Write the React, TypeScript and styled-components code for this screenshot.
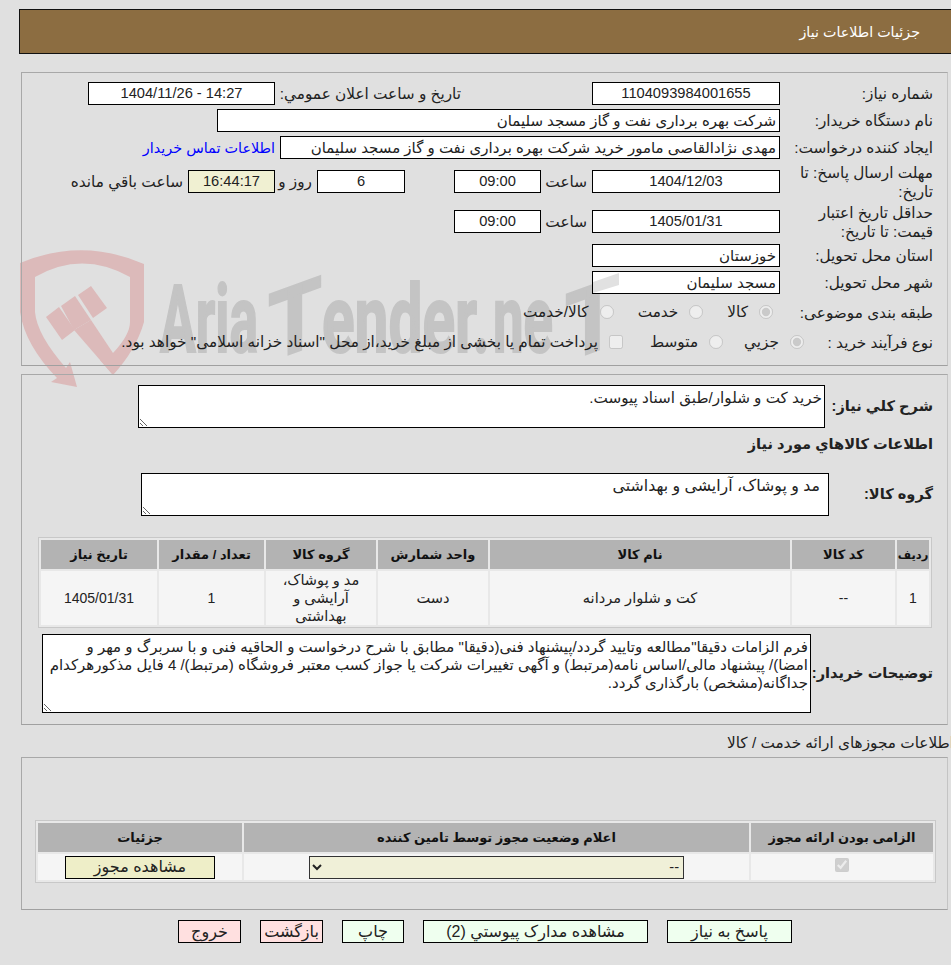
import * as React from "react";
import styled, { createGlobalStyle } from "styled-components";

const GlobalStyle = createGlobalStyle`
  html, body {
    margin: 0;
    padding: 0;
    background: #e0e0e0;
    overflow: hidden;
  }
  body {
    font-family: "Liberation Sans", "DejaVu Sans", sans-serif;
    font-size: 15.3px;
    color: #222;
  }
`;

const Page = styled.div`
  position: relative;
  width: 951px;
  height: 965px;
  overflow: hidden;
  padding-top: 9px;
  box-sizing: border-box;
`;

const Watermark = styled.svg`
  position: absolute;
  left: 0;
  top: 0;
  z-index: 0;
`;

const Content = styled.div`
  position: relative;
  z-index: 1;
`;

const Header = styled.div`
  height: 45px;
  margin-left: 19px;
  box-sizing: border-box;
  border: 1px solid #111;
  border-right: 0;
  background: #8c6d41;
  color: #fff;
  font-size: 14.3px;
  display: flex;
  align-items: center;
  padding-right: 31px;
`;

const Panel = styled.div<{ $top: number; $pt: number; $pb: number; $pr?: number }>`
  margin: ${(p) => p.$top}px 3px 0 0;
  margin-left: 21px;
  padding: ${(p) => p.$pt}px ${(p) => p.$pr ?? 14}px ${(p) => p.$pb}px 0;
  border: 1px solid #a8a8a8;
  border-right-color: #c4c4c4;
  border-bottom-color: #a0a0a0;
`;

const Row = styled.div<{ $top?: number; $h?: number }>`
  display: flex;
  align-items: center;
  margin-top: ${(p) => p.$top ?? 0}px;
  height: ${(p) => (p.$h ? `${p.$h}px` : "auto")};
`;

const Label = styled.div<{ $w?: number; $bold?: boolean; $wrap?: number }>`
  flex: none;
  width: ${(p) => p.$w ?? 153}px;
  box-sizing: border-box;
  padding-left: ${(p) => p.$wrap ?? 0}px;
  line-height: 19px;
  font-size: ${(p) => (p.$bold ? "14.6px" : "inherit")};
  font-weight: ${(p) => (p.$bold ? 700 : 400)};
`;

const Inline = styled.div<{ $w: number; $ml?: number; $mr?: number }>`
  flex: none;
  width: ${(p) => p.$w}px;
  margin-left: ${(p) => p.$ml ?? 0}px;
  margin-right: ${(p) => p.$mr ?? 0}px;
  box-sizing: border-box;
  white-space: nowrap;
`;

const Field = styled.div<{ $w: number; $num?: boolean; $tint?: boolean; $wedge?: boolean }>`
  position: relative;
  flex: none;
  width: ${(p) => p.$w}px;
  height: 23px;
  line-height: 21px;
  box-sizing: border-box;
  border: 1px solid #000;
  background: ${(p) => (p.$tint ? "#f0f0d2" : "#fff")};
  font-size: ${(p) => (p.$num ? "14.67px" : "15px")};
  text-align: ${(p) => (p.$num ? "center" : "right")};
  padding: 0 3px;
  white-space: nowrap;
  overflow: hidden;

  /* tip of the logo's last letter, which shows through this field */
  ${(p) =>
    p.$wedge &&
    `&::before {
      content: "";
      position: absolute;
      left: 0;
      top: 0;
      width: 26px;
      height: 21px;
      background: #e1e1e1;
      clip-path: polygon(0 10px, 26px 1px, 26px 13px, 0 21px);
    }`}
`;

const ContactLink = styled.a`
  color: #00f;
  font-size: 14.4px;
  text-decoration: none;
  margin-right: 5px;
  white-space: nowrap;
`;

const Option = styled.label<{ $ml?: number }>`
  display: flex;
  align-items: center;
  gap: 11px;
  margin-left: ${(p) => p.$ml ?? 24}px;
  white-space: nowrap;
`;

const Tick = styled.input`
  width: 14px;
  height: 14px;
  margin: 0;
  flex: none;
`;

const Note = styled.textarea<{ $w: number; $h: number; $pr?: number; $size?: number }>`
  flex: none;
  display: block;
  width: ${(p) => p.$w}px;
  height: ${(p) => p.$h}px;
  box-sizing: border-box;
  border: 1px solid #000;
  border-radius: 0;
  padding: 3px ${(p) => p.$pr ?? 2}px 2px 2px;
  margin: 0;
  background: #fff;
  color: #222;
  font: inherit;
  font-size: ${(p) => p.$size ?? 15}px;
  line-height: 18px;
  outline: 0;
`;

const Grid = styled.table<{ $w: number; $mr?: number }>`
  width: ${(p) => p.$w}px;
  margin-right: ${(p) => p.$mr ?? 0}px;
  table-layout: fixed;
  border-collapse: separate;
  border-spacing: 2px;
  border: 1px solid #c8c8c8;
  background: #e8e8e8;
  box-sizing: border-box;
`;

const Th = styled.th<{ $small?: boolean }>`
  background: #b3b3b3;
  color: #111;
  font-size: ${(p) => (p.$small ? "11.5px" : "13px")};
  font-weight: 700;
  padding: 0;
  height: 29px;
`;

const Td = styled.td<{ $h: number; $num?: boolean }>`
  background: #f5f5f5;
  text-align: center;
  padding: 0 10px;
  height: ${(p) => p.$h}px;
  line-height: 18px;
  font-size: ${(p) => (p.$num ? "14px" : "14.6px")};
`;

const Heading = styled.div`
  height: 20px;
  line-height: 20px;
  margin: 8px -3px 0 0;
  white-space: nowrap;
`;

const StatusSelect = styled.select`
  display: block;
  width: 375px;
  height: 23px;
  margin: 0 auto;
  box-sizing: border-box;
  border: 1px solid #333;
  border-radius: 0;
  background-color: #f0f0d8;
  color: #222;
  font: inherit;
  opacity: 1;
`;

const PermitButton = styled.button`
  display: block;
  width: 150px;
  height: 23px;
  margin: 0 auto;
  padding: 0;
  border: 1px solid #000;
  background: #eeeec8;
  color: #222;
  font: inherit;
  font-size: 16px;
`;

const Actions = styled.div`
  display: flex;
  gap: 19px;
  margin: 10px 159px 0 0;
`;

const ActionButton = styled.button<{ $w: number; $danger?: boolean }>`
  width: ${(p) => p.$w}px;
  height: 23px;
  padding: 0;
  border: 1px solid #000;
  background: ${(p) => (p.$danger ? "#ffe0e0" : "#efffef")};
  color: #222;
  font: inherit;
  font-size: 16px;
`;

const noop = () => {};

const markFont = {
  fontFamily: "Roboto, sans-serif",
  fontWeight: 700,
  fontSize: 94,
  fill: "#c4c4c4",
  stroke: "#c4c4c4",
  strokeWidth: 2,
  direction: "ltr" as const,
  lengthAdjust: "spacingAndGlyphs",
};

const buyerNote =
  'فرم الزامات دقیقا"مطالعه وتایید گردد/پیشنهاد فنی(دقیقا" مطابق با شرح درخواست و الحاقیه فنی و با سربرگ و مهر و\n' +
  'امضا)/ پیشنهاد مالی/اساس نامه(مرتبط) و آگهی تغییرات شرکت یا جواز کسب معتبر فروشگاه (مرتبط)/ 4 فایل مذکورهرکدام\n' +
  "جداگانه(مشخص) بارگذاری گردد.";

export default function App() {
  return (
    <Page dir="rtl">
      <GlobalStyle />
      <Watermark width="951" height="965" viewBox="0 0 951 965">
        <g fill="#dcbaba">
          <path d="M20 263 Q82 237 144 264 V322 Q136 350 113 375 L100 360 L113 353 Q130 335 130 322 V277 Q82 250 35 277 V312 Q37 335 66 368 L70 362 L77 387 L51 382 L57 378 Q25 345 20 312 Z" />
          <polygon points="74,330 113,375 113,353 91,320" />
          <polygon points="61,306 75,296 91,320 74,330" />
          <polygon points="78,295 91,286 107,308 93,318" />
          <polygon points="46,317 59,307 75,330 62,340" />
        </g>
        <text x="160" y="352" textLength="98" {...markFont}>Aria</text>
        <text transform="translate(268 362) skewY(-20)" textLength="54" {...markFont}>T</text>
        <text x="322" y="352" textLength="168" {...markFont}>ender.</text>
        <text x="493" y="352" textLength="60" {...markFont}>ne</text>
        <text transform="translate(565 362) skewY(-20)" textLength="55" {...markFont}>T</text>
      </Watermark>
      <Content>
        <Header>جزئیات اطلاعات نیاز</Header>

        <Panel $top={18} $pt={9} $pb={13}>
          <Row>
            <Label>شماره نیاز:</Label>
            <Field $w={188} $num>1104093984001655</Field>
            <Inline $w={186} $mr={131}>تاریخ و ساعت اعلان عمومي:</Inline>
            <Field $w={187} $num dir="ltr">1404/11/26 - 14:27</Field>
          </Row>
          <Row $top={4}>
            <Label>نام دستگاه خریدار:</Label>
            <Field $w={563}>شرکت بهره برداری نفت و گاز مسجد سلیمان</Field>
          </Row>
          <Row $top={4}>
            <Label>ایجاد کننده درخواست:</Label>
            <Field $w={500}>مهدی نژادالقاصی مامور خرید شرکت بهره برداری نفت و گاز مسجد سلیمان</Field>
            <ContactLink href="#">اطلاعات تماس خریدار</ContactLink>
          </Row>
          <Row $top={4} $h={37}>
            <Label>مهلت ارسال پاسخ: تا تاریخ:</Label>
            <Field $w={188} $num>1404/12/03</Field>
            <Inline $w={46} $mr={5}>ساعت</Inline>
            <Field $w={87} $num>09:00</Field>
            <Inline $w={0} $ml={49} />
            <Field $w={88} $num>6</Field>
            <Inline $w={37} $mr={5}>روز و</Inline>
            <Field $w={87} $num $tint>16:44:17</Field>
            <Inline $w={113} $mr={5}>ساعت باقي مانده</Inline>
          </Row>
          <Row $top={3} $h={37}>
            <Label $wrap={20}>حداقل تاریخ اعتبار قیمت: تا تاریخ:</Label>
            <Field $w={188} $num>1405/01/31</Field>
            <Inline $w={46} $mr={5}>ساعت</Inline>
            <Field $w={87} $num>09:00</Field>
          </Row>
          <Row $top={4}>
            <Label>استان محل تحویل:</Label>
            <Field $w={188}>خوزستان</Field>
          </Row>
          <Row $top={4}>
            <Label>شهر محل تحویل:</Label>
            <Field $w={188} $wedge>مسجد سلیمان</Field>
          </Row>
          <Row $top={8} $h={20}>
            <Label $w={160}>طبقه بندی موضوعی:</Label>
            <Option><Tick type="radio" name="cat" checked disabled onChange={noop} />کالا</Option>
            <Option><Tick type="radio" name="cat" disabled />خدمت</Option>
            <Option><Tick type="radio" name="cat" disabled />کالا/خدمت</Option>
          </Row>
          <Row $top={10} $h={20}>
            <Label $w={129}>نوع فرآیند خرید :</Label>
            <Option $ml={21}><Tick type="radio" name="proc" checked disabled onChange={noop} />جزیي</Option>
            <Option $ml={27}><Tick type="radio" name="proc" disabled />متوسط</Option>
            <Option>
              <Tick type="checkbox" disabled />
              پرداخت تمام یا بخشی از مبلغ خرید،از محل "اسناد خزانه اسلامی" خواهد بود.
            </Option>
          </Row>
        </Panel>

        <Panel $top={8} $pt={10} $pb={11}>
          <Row>
            <Label $w={108} $bold>شرح کلي نیاز:</Label>
            <Note $w={687} $h={43} $size={15.2} readOnly value="خرید کت و شلوار/طبق اسناد پیوست." />
          </Row>
          <Row $top={6} $h={20}>
            <Label $w={300} $bold>اطلاعات کالاهاي مورد نیاز</Label>
          </Row>
          <Row $top={19}>
            <Label $w={104} $bold>گروه کالا:</Label>
            <Note $w={688} $h={43} $pr={8} $size={15.8} readOnly value="مد و پوشاک، آرایشی و بهداشتی" />
          </Row>
          <Row $top={21}>
            <Grid $w={894} $mr={1}>
              <colgroup>
                <col style={{ width: 32 }} />
                <col style={{ width: 103 }} />
                <col style={{ width: 300 }} />
                <col style={{ width: 110 }} />
                <col style={{ width: 110 }} />
                <col style={{ width: 105 }} />
                <col />
              </colgroup>
              <thead>
                <tr>
                  <Th $small>ردیف</Th>
                  <Th>کد کالا</Th>
                  <Th>نام کالا</Th>
                  <Th>واحد شمارش</Th>
                  <Th>گروه کالا</Th>
                  <Th>تعداد / مقدار</Th>
                  <Th>تاریخ نیاز</Th>
                </tr>
              </thead>
              <tbody>
                <tr>
                  <Td $h={54} $num>1</Td>
                  <Td $h={54} $num>--</Td>
                  <Td $h={54}>کت و شلوار مردانه</Td>
                  <Td $h={54}>دست</Td>
                  <Td $h={54}>مد و پوشاک، آرایشی و بهداشتی</Td>
                  <Td $h={54} $num>1</Td>
                  <Td $h={54} $num>1405/01/31</Td>
                </tr>
              </tbody>
            </Grid>
          </Row>
          <Row $top={6}>
            <Label $w={122} $bold>توضیحات خریدار:</Label>
            <Note $w={769} $h={79} readOnly value={buyerNote} />
          </Row>
        </Panel>

        <Heading>اطلاعات مجوزهای ارائه خدمت / کالا</Heading>

        <Panel $top={4} $pt={62} $pb={26} $pr={11}>
          <Grid $w={901}>
            <colgroup>
              <col style={{ width: 182 }} />
              <col style={{ width: 505 }} />
              <col />
            </colgroup>
            <thead>
              <tr>
                <Th>الزامی بودن ارائه مجوز</Th>
                <Th>اعلام وضعیت مجوز توسط تامین کننده</Th>
                <Th>جزئیات</Th>
              </tr>
            </thead>
            <tbody>
              <tr>
                <Td $h={26}><Tick type="checkbox" checked disabled onChange={noop} /></Td>
                <Td $h={26}>
                  <StatusSelect disabled>
                    <option>--</option>
                  </StatusSelect>
                </Td>
                <Td $h={26}><PermitButton type="button">مشاهده مجوز</PermitButton></Td>
              </tr>
            </tbody>
          </Grid>
        </Panel>

        <Actions>
          <ActionButton $w={125} type="button">پاسخ به نیاز</ActionButton>
          <ActionButton $w={225} type="button">مشاهده مدارک پیوستي (2)</ActionButton>
          <ActionButton $w={62} type="button">چاپ</ActionButton>
          <ActionButton $w={63} $danger type="button">بازگشت</ActionButton>
          <ActionButton $w={63} $danger type="button">خروج</ActionButton>
        </Actions>
      </Content>
    </Page>
  );
}
